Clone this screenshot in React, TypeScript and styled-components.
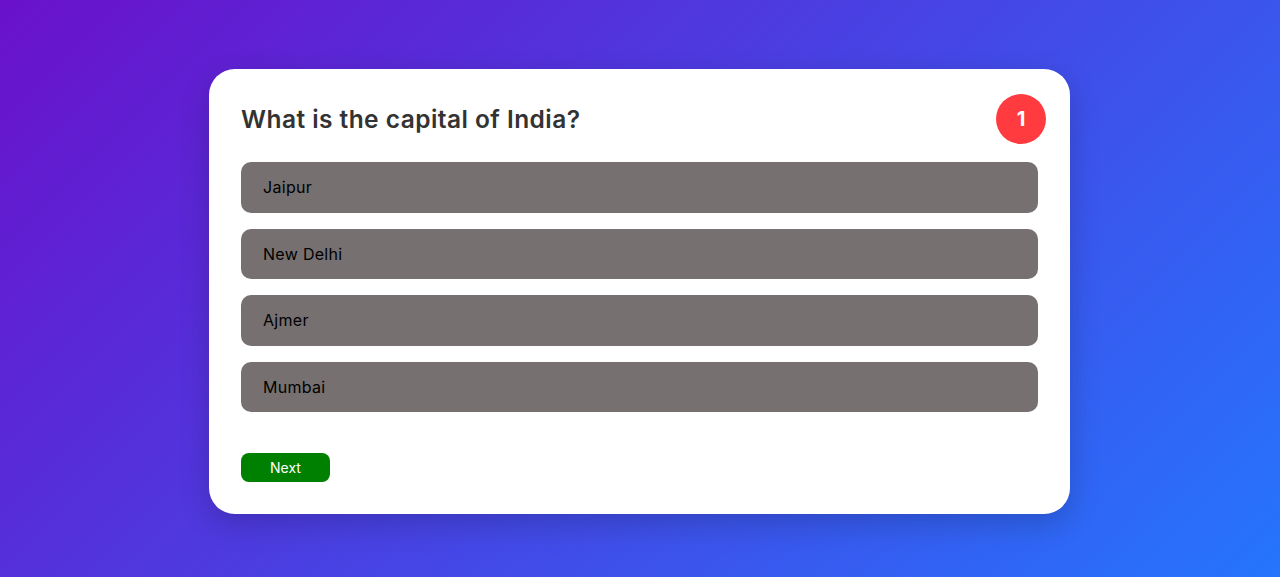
import React from "react";
import styled, { createGlobalStyle } from "styled-components";

const Global = createGlobalStyle`
  html, body { margin: 0; padding: 0; }
  body {
    font-family: "Poppins", Inter, "Noto Sans", sans-serif;
    background: linear-gradient(135deg, #6a11cb 0%, #2575fc 100%);
    min-height: 100vh;
  }
  * { box-sizing: border-box; }
`;

const Page = styled.div`
  min-height: 577px;
  display: flex;
  justify-content: center;
  align-items: flex-start;
  padding-top: 69px;
`;

const Card = styled.div`
  width: 861px;
  margin-left: -1px;
  background: #ffffff;
  border-radius: 26px;
  padding: 25px 32px 32px 32px;
  box-shadow: 0 10px 30px rgba(0, 0, 0, 0.18);
`;

const Header = styled.div`
  display: flex;
  align-items: center;
  justify-content: space-between;
  height: 50px;
  margin-bottom: 18px;
`;

const Title = styled.h2`
  margin: 0;
  font-family: Inter, "Noto Sans", sans-serif;
  font-size: 24.5px;
  font-weight: 600;
  color: #333333;
  letter-spacing: 0.45px;
`;

const Badge = styled.div`
  width: 50px;
  height: 50px;
  border-radius: 50%;
  background: #ff3b3f;
  color: #ffffff;
  display: flex;
  align-items: center;
  justify-content: center;
  font-family: Inter, sans-serif;
  font-weight: 700;
  font-size: 20px;
  margin-right: -8px;
`;

const Options = styled.div`
  display: flex;
  flex-direction: column;
  gap: 16px;
  width: 797px;
`;

const Option = styled.button`
  height: 50.5px;
  border: none;
  border-radius: 10px;
  background: #767070;
  color: #000000;
  text-align: left;
  padding: 0 22px;
  font-family: Inter, "Noto Sans", sans-serif;
  font-size: 16px;
  font-weight: 400;
  letter-spacing: 0.3px;
  cursor: pointer;
`;

const Footer = styled.div`
  margin-top: 41px;
  display: flex;
`;

const NextButton = styled.button`
  width: 89px;
  height: 29px;
  border: none;
  border-radius: 8px;
  background: #008000;
  color: #ffffff;
  font-family: Inter, "Noto Sans", sans-serif;
  font-size: 14px;
  cursor: pointer;
`;

const options = ["Jaipur", "New Delhi", "Ajmer", "Mumbai"];

export default function App() {
  return (
    <>
      <Global />
      <Page>
        <Card>
          <Header>
            <Title>What is the capital of India?</Title>
            <Badge>1</Badge>
          </Header>
          <Options>
            {options.map((o) => (
              <Option key={o}>{o}</Option>
            ))}
          </Options>
          <Footer>
            <NextButton>Next</NextButton>
          </Footer>
        </Card>
      </Page>
    </>
  );
}
